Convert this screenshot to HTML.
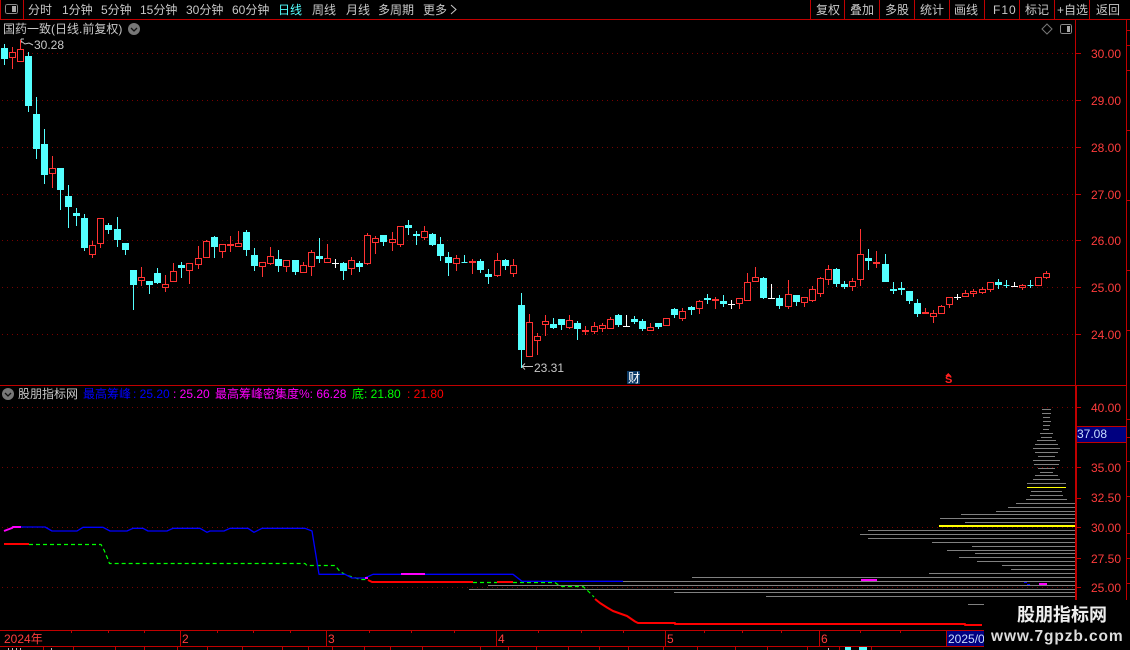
<!DOCTYPE html>
<html><head><meta charset="utf-8"><style>
html,body{margin:0;padding:0;background:#000}
#p{position:relative;width:1130px;height:650px;overflow:hidden;background:#000;font-family:"Liberation Sans","WenQuanYi Zen Hei","Noto Sans CJK SC",sans-serif;font-size:12px;color:#c8c8c8}
#p svg{position:absolute;left:0;top:0}
.t{position:absolute;white-space:nowrap;line-height:14px;height:14px}
.r{color:#ff3c3c}
.a{color:#ff3c3c;left:1091px}
</style></head><body><div id="p">
<svg width="1130" height="650" shape-rendering="crispEdges" fill="none">
<!-- grid -->
<g stroke="#7a0000" stroke-dasharray="1 4">
<path d="M2 53.5H1075M2 100.5H1075M2 147.5H1075M2 194.5H1075M2 240.5H1075M2 287.5H1075M2 334.5H1075M2 407.5H1075M2 467.5H1075M2 527.5H1075M2 587.5H1075"/>
</g>
<!-- frame -->
<g stroke="#c00000">
<path d="M0 19.5H1130M23.5 0V19M0.5 0V19M810.5 0V19M844.5 0V19M879.5 0V19M914.5 0V19M949.5 0V19M984.5 0V19M1019.5 0V19M1054.5 0V19M1089.5 0V19"/>
<path d="M1075.5 20V600M1126.5 20V600M0 385.5H1126"/>
<path d="M1076 53.5h5M1076 100.5h5M1076 147.5h5M1076 194.5h5M1076 240.5h5M1076 287.5h5M1076 334.5h5M1076 407.5h5M1076 467.5h5M1076 498.5h5M1076 527.5h5M1076 558.5h5M1076 587.5h5"/>
<path d="M1127 30.5h3M1127 45.5h3M1127 70.5h3M1127 130.5h3M1127 200.5h3M1127 270.5h3M1127 330.5h3M1127 419.5h3M1127 437.5h3M1127 461.5h3M1127 496.5h3M1127 533.5h3M1127 558.5h3M1127 583.5h3"/>
<path d="M0 630.5H984M0 646.5H984M180.5 630V646M326.5 630V646M496.5 630V646M665.5 630V646M819.5 630V646M946.5 630V646"/>
<path d="M71.5 631v2M108.5 631v2M144.5 631v2M217.5 631v2M253.5 631v2M290.5 631v2M369.5 631v2M411.5 631v2M454.5 631v2M538.5 631v2M581.5 631v2M623.5 631v2M704.5 631v2M742.5 631v2M781.5 631v2M860.5 631v2M900.5 631v2"/>
<path d="M43.5 647v3M73.5 647v3M115.5 647v3M144.5 647v3M177.5 647v3M207.5 647v3M242.5 647v3M282.5 647v3M308.5 647v3M332.5 647v3M364.5 647v3M390.5 647v3M422.5 647v3M480.5 647v3M508.5 647v3M536.5 647v3M568.5 647v3M599.5 647v3M628.5 647v3M663.5 647v3M697.5 647v3M735.5 647v3M767.5 647v3M807.5 647v3M839.5 647v3M871.5 647v3"/>
</g>
<path d="M1075 386h2v214h-2z" fill="#c00000"/>
<path fill="#bbb" d="M8 648h1v2H8zM12 648h1v2h-1zM16 648h1v2h-1zM20 648h1v2h-1zM51 648h1v2h-1zM828 648h1v2h-1z"/>
<path fill="#54ffff" d="M845 647h6v3h-6zM859 647h8v3h-8z"/>
<!-- top icons -->
<rect x="5.5" y="4.5" width="12" height="9" rx="2" stroke="#8a8a8a"/><rect x="12" y="6" width="4" height="6" fill="#aaa"/>
<rect x="1060.5" y="24.5" width="11" height="9" rx="2" stroke="#8a8a8a"/><rect x="1067" y="26" width="3" height="6" fill="#aaa"/>
<g shape-rendering="auto">
<path d="M1047 24l5 5-5 5-5-5z" stroke="#777"/>
<circle cx="134" cy="29" r="6" fill="#777"/><path d="M131 28l3 3 3-3" stroke="#111" stroke-width="1.3"/>
<circle cx="8" cy="394" r="6" fill="#777"/><path d="M5 393l3 3 3-3" stroke="#111" stroke-width="1.3"/>
<path d="M451 5l5 4.500-5 4.500" stroke="#c8c8c8"/>
<path d="M33 45l-4-2-4 1-4-3M21 39v4M21 39h3M21 39" stroke="#c8c8c8"/>
<path d="M533 366.500H522l3-3M522 366.500l3 3" stroke="#c8c8c8"/>
</g>
<!-- cyan candles -->
<path fill="#54ffff" stroke="#54ffff" d="M4.500 44V65M1.500 48.500h6v10h-6zM28.500 52V112M25.500 56.500h6v49h-6zM36.500 97V159M33.500 114.500h6v34h-6zM44.500 129V184M41.500 144.500h6v30h-6zM60.500 168V210M57.500 168.500h6v21h-6zM68.500 185V228M65.500 196.500h6v10h-6zM76.500 208V226M73.500 213.500h6v2h-6zM84.500 214V251M81.500 218.500h6v29h-6zM108.500 223V234M105.500 225.500h6v4h-6zM117.500 217V247M114.500 229.500h6v10h-6zM125.500 243V255M122.500 243.500h6v6h-6zM133.500 270V310M130.500 270.500h6v14h-6zM149.500 281V294M146.500 281.500h6v3h-6zM157.500 268V284M154.500 273.500h6v9h-6zM181.500 262V278M178.500 265.500h6v2h-6zM214.500 236V258M211.500 237.500h6v9h-6zM246.500 230V256M243.500 232.500h6v17h-6zM254.500 248V271M251.500 255.500h6v10h-6zM278.500 250V272M275.500 259.500h6v6h-6zM295.500 260V275M292.500 260.500h6v11h-6zM319.500 238V263M316.500 256.500h6v2h-6zM343.500 262V280M340.500 263.500h6v7h-6zM359.500 261V272M356.500 263.500h6v3h-6zM383.500 235V246M380.500 235.500h6v6h-6zM408.500 220V235M405.500 225.500h6v2h-6zM416.500 231V245M413.500 234.500h6v1h-6zM432.500 233V246M429.500 234.500h6v10h-6zM440.500 237V261M437.500 244.500h6v11h-6zM448.500 252V276M445.500 257.500h6v5h-6zM464.500 255V263M461.500 262.500h6M480.500 259V273M477.500 261.500h6v8h-6zM488.500 269V284M485.500 274.500h6v2h-6zM505.500 259V270M502.500 260.500h6v5h-6zM521.500 293V368M518.500 305.500h6v44h-6zM553.500 318V329M550.500 324.500h6v3h-6zM561.500 319V330M558.500 319.500h6v5h-6zM577.500 321V340M574.500 323.500h6v5h-6zM618.500 314V327M615.500 315.500h6v9h-6zM634.500 316V324M631.500 319.500h6v2h-6zM642.500 319V331M639.500 321.500h6v7h-6zM658.500 323V329M655.500 323.500h6v3h-6zM674.500 308V318M671.500 309.500h6v5h-6zM691.500 306V315M688.500 307.500h6v2h-6zM707.500 294V304M704.500 298.500h6v1h-6zM723.500 295V307M720.500 301.500h6v2h-6zM763.500 277V299M760.500 278.500h6v19h-6zM779.500 295V309M776.500 298.500h6v7h-6zM796.500 295V306M793.500 295.500h6v6h-6zM836.500 268V287M833.500 269.500h6v14h-6zM844.500 281V289M841.500 284.500h6v2h-6zM868.500 249V270M865.500 258.500h6v2h-6zM885.500 254V282M882.500 264.500h6v17h-6zM893.500 282V294M890.500 289.500h6v1h-6zM901.500 282V295M898.500 288.500h6v1h-6zM909.500 291V304M906.500 291.500h6v9h-6zM917.500 299V317M914.500 303.500h6v10h-6zM998.500 279V289M995.500 282.500h6v2h-6zM1006.500 280V288M1003.500 285.500h6M1030.500 280V288M1027.500 285.500h6"/>
<!-- red wicks -->
<path stroke="#ff3232" d="M12.500 47V69M20.500 40V62M52.500 156V188M92.500 241V258M100.500 218V248M141.500 267V286M165.500 275V292M173.500 263V282M189.500 263V284M198.500 246V269M206.500 240V258M222.500 244V258M230.500 236V252M238.500 231V247M262.500 262V277M270.500 247V265M286.500 260V272M303.500 262V273M311.500 250V276M327.500 244V263M351.500 257V275M367.500 233V265M375.500 236V254M392.500 232V251M400.500 226V247M424.500 226V240M456.500 255V271M472.500 259V274M497.500 253V277M513.500 259V277M529.500 314V357M537.500 333V355M545.500 315V336M569.500 315V329M585.500 326V335M594.500 322V334M602.500 323V332M610.500 317V329M650.500 323V331M666.500 318V326M682.500 308V321M699.500 300V314M715.500 297V309M739.500 298V309M747.500 273V301M755.500 267V282M788.500 280V309M804.500 297V307M812.500 286V302M820.500 277V297M828.500 265V285M852.500 278V291M860.500 229V286M876.500 251V268M925.500 308V314M933.500 310V323M941.500 305V314M949.500 297V308M965.500 290V297M973.500 289V297M982.500 287V294M990.500 282V292M1022.500 284V290M1038.500 277V286M1046.500 271V279"/>
<!-- red bodies -->
<path stroke="#ff3232" fill="#000" d="M9.500 52.500h6v5h-6zM17.500 49.500h6v12h-6zM49.500 168.500h6v5h-6zM89.500 245.500h6v9h-6zM97.500 218.500h6v25h-6zM138.500 277.500h6v3h-6zM162.500 284.500h6v3h-6zM170.500 271.500h6v10h-6zM186.500 263.500h6v7h-6zM195.500 258.500h6v6h-6zM203.500 241.500h6v16h-6zM219.500 244.500h6v7h-6zM227.500 244.500h6v1h-6zM235.500 243.500h6v3h-6zM259.500 262.500h6v4h-6zM267.500 256.500h6v7h-6zM283.500 260.500h6v6h-6zM300.500 265.500h6v7h-6zM308.500 252.500h6v14h-6zM324.500 258.500h6v4h-6zM348.500 260.500h6v8h-6zM364.500 235.500h6v28h-6zM372.500 238.500h6v4h-6zM389.500 239.500h6v3h-6zM397.500 226.500h6v18h-6zM421.500 231.500h6v6h-6zM453.500 258.500h6v5h-6zM469.500 261.500h6v1h-6zM494.500 260.500h6v15h-6zM510.500 265.500h6v8h-6zM526.500 322.500h6v34h-6zM534.500 336.500h6v4h-6zM542.500 321.500h6v3h-6zM566.500 320.500h6v7h-6zM582.500 330.500h6v1h-6zM591.500 326.500h6v5h-6zM599.500 325.500h6v3h-6zM607.500 319.500h6v9h-6zM647.500 327.500h6v3h-6zM663.500 318.500h6v7h-6zM679.500 311.500h6v7h-6zM696.500 301.500h6v7h-6zM712.500 299.500h6v1h-6zM736.500 298.500h6v5h-6zM744.500 282.500h6v18h-6zM752.500 277.500h6v4h-6zM785.500 294.500h6v12h-6zM801.500 297.500h6v5h-6zM809.500 289.500h6v11h-6zM817.500 278.500h6v15h-6zM825.500 269.500h6v10h-6zM849.500 281.500h6v5h-6zM857.500 254.500h6v25h-6zM873.500 262.500h6v1h-6zM922.500 312.500h6v1h-6zM930.500 313.500h6v3h-6zM938.500 306.500h6v7h-6zM946.500 297.500h6v7h-6zM962.500 293.500h6v3h-6zM970.500 291.500h6v2h-6zM979.500 289.500h6v3h-6zM987.500 282.500h6v7h-6zM1019.500 285.500h6v2h-6zM1035.500 277.500h6v8h-6zM1043.500 273.500h6v4h-6z"/>
<!-- white doji -->
<path stroke="#fff" d="M335.500 259V268M332 263.500h7M626.500 315V326M623 326.500h7M731.500 300V309M728 304.500h7M771.500 284V298M768 298.500h7M957.500 294V300M954 297.500h7M1014.500 282V287M1011 286.500h7"/>
<!-- chips -->
<path stroke="#808080" d="M1042 409.500h9M1042 413.500h9M1043 417.500h7M1043 421.500h8M1043 425.500h7M1043 429.500h6M1040 433.500h13M1041 437.500h11M1037 440.500h19M1035 444.500h23M1033 448.500h27M1035 452.500h23M1038 456.500h17M1033 460.500h27M1034 464.500h25M1038 468.500h17M1040 472.500h13M1035 475.500h23M1033 479.500h27M1027 483.500h39M1031 491.500h31M1030 495.500h33M1026 499.500h41M1016 503.500h59M1008 507.500h67M996 511.500h79M961 514.500h114M940 518.500h135M965 522.500h110M868 530.500h207M860 534.500h215M868 538.500h207M932 542.500h143M972 546.500h103M947 550.500h128M975 553.500h100M959 557.500h116M977 561.500h98M1002 565.500h73M1011 569.500h64M929 573.500h146M692 577.500h383M623 581.500h452M488 585.500h587M469 589.500h606M674 592.500h401M766 596.500h309M968 604.500h16"/>
<path stroke="#ffff00" d="M1027 487.500h39"/>
<path fill="#ffff00" d="M939 525h136v2H939z"/>
<!-- magenta chip marks -->
<path fill="#ff00ff" d="M861 579h16v2h-16zM1039 583h8v2h-8z"/>
<path stroke="#0000ff" d="M1024 582.500h3M1027 584.500h3"/>
<!-- curves -->
<g shape-rendering="auto" stroke-linejoin="round">
<path stroke="#00ff00" stroke-width="1.2" stroke-dasharray="4 3" d="M29 544.500H101L104 550L107 557L109.500 563.500H305L307 565.500H335L340 571.500L347 575.500L353 577L360 579.500H368M473 582.500H497M513 582.500H555L557 584L562 586.500H583L588 591L594 597"/>
<path stroke="#0000ff" stroke-width="1.300" d="M21 527H45L52 531H77L83 527.300H103L110 531H127L133 528.300H143L148 531H167L173 528.300H200L207 532.300L210 531H224L230 528.300H248L254 532.300L262 528.300H305L312 531L319 574.300H345L352 578H365L373 574.300H513L522 581.300H623"/>
<path stroke="#ff00ff" stroke-width="2" d="M4 531L12 528L13 527H21"/>
<path stroke="#ff00ff" stroke-width="2" d="M401 574H425M365 578H368"/>
<path stroke="#ff0000" stroke-width="2" d="M4 544H29M368 580L372 582H473M497 582H513M595 599L600 603L607 607.500L613 611L627 616L635 621.500L638 623H675V624H965V625H982"/>
</g>
<!-- labels boxes -->
<rect x="1076.500" y="426.500" width="50" height="16" fill="#000080" stroke="#c00000"/>
<rect x="947" y="631" width="37" height="15" fill="#000080"/>
<rect x="627" y="371" width="13" height="13" fill="#0b3a66"/>
<path fill="#ff2020" d="M948 373l3 3h-6z"/>
<rect x="984" y="600" width="146" height="50" fill="#000"/>
</svg>

<div class="t" style="left:28px;top:3px">分时</div>
<div class="t" style="left:62px;top:3px">1分钟</div>
<div class="t" style="left:101px;top:3px">5分钟</div>
<div class="t" style="left:140px;top:3px">15分钟</div>
<div class="t" style="left:186px;top:3px">30分钟</div>
<div class="t" style="left:232px;top:3px">60分钟</div>
<div class="t" style="left:278px;top:3px;color:#54ffff">日线</div>
<div class="t" style="left:312px;top:3px">周线</div>
<div class="t" style="left:346px;top:3px">月线</div>
<div class="t" style="left:378px;top:3px">多周期</div>
<div class="t" style="left:423px;top:3px">更多</div>

<div class="t" style="left:816px;top:3px">复权</div>
<div class="t" style="left:850px;top:3px">叠加</div>
<div class="t" style="left:885px;top:3px">多股</div>
<div class="t" style="left:920px;top:3px">统计</div>
<div class="t" style="left:954px;top:3px">画线</div>
<div class="t" style="left:993px;top:3px;letter-spacing:1px">F10</div>
<div class="t" style="left:1025px;top:3px">标记</div>
<div class="t" style="left:1057px;top:3px">+自选</div>
<div class="t" style="left:1096px;top:3px">返回</div>

<div class="t" style="left:3px;top:22px">国药一致(日线.前复权)</div>
<div class="t" style="left:34px;top:38px">30.28</div>
<div class="t" style="left:534px;top:361px">23.31</div>
<div class="t" style="left:628px;top:371px;color:#fff">财</div>
<div class="t" style="left:945px;top:373px;color:#ff2020;font-weight:bold;font-size:11px;line-height:14px">S</div>

<div class="t a" style="top:47px">30.00</div>
<div class="t a" style="top:94px">29.00</div>
<div class="t a" style="top:141px">28.00</div>
<div class="t a" style="top:188px">27.00</div>
<div class="t a" style="top:234px">26.00</div>
<div class="t a" style="top:281px">25.00</div>
<div class="t a" style="top:328px">24.00</div>

<div class="t" style="left:18px;top:387px">股朋指标网</div>
<div class="t" style="left:83px;top:387px;color:#0000ff">最高筹峰</div>
<div class="t" style="left:133px;top:387px;color:#0000ff">: 25.20</div>
<div class="t" style="left:173px;top:387px;color:#ff00ff">: 25.20</div>
<div class="t" style="left:215px;top:387px;color:#ff00ff">最高筹峰密集度%: 66.28</div>
<div class="t" style="left:352px;top:387px;color:#00ff00">底: 21.80</div>
<div class="t" style="left:407px;top:387px;color:#ff0000">: 21.80</div>

<div class="t a" style="top:401px">40.00</div>
<div class="t" style="left:1077px;top:427px;color:#c8dcff">37.08</div>
<div class="t a" style="top:461px">35.00</div>
<div class="t a" style="top:491px">32.50</div>
<div class="t a" style="top:521px">30.00</div>
<div class="t a" style="top:552px">27.50</div>
<div class="t a" style="top:581px">25.00</div>

<div class="t r" style="left:4px;top:632px">2024年</div>
<div class="t r" style="left:182px;top:632px">2</div>
<div class="t r" style="left:328px;top:632px">3</div>
<div class="t r" style="left:498px;top:632px">4</div>
<div class="t r" style="left:667px;top:632px">5</div>
<div class="t r" style="left:821px;top:632px">6</div>
<div class="t" style="left:948px;top:632px;width:36px;overflow:hidden;color:#c8dcff">2025/06</div>

<div class="t" style="left:1017px;top:603px;height:24px;line-height:24px;font-size:18px;font-weight:bold;color:#eee">股朋指标网</div>
<div class="t" style="left:991px;top:627px;height:20px;line-height:20px;font-size:15.500px;font-weight:bold;color:#ddd;letter-spacing:.9px">www.7gpzb.com</div>
</div></body></html>
